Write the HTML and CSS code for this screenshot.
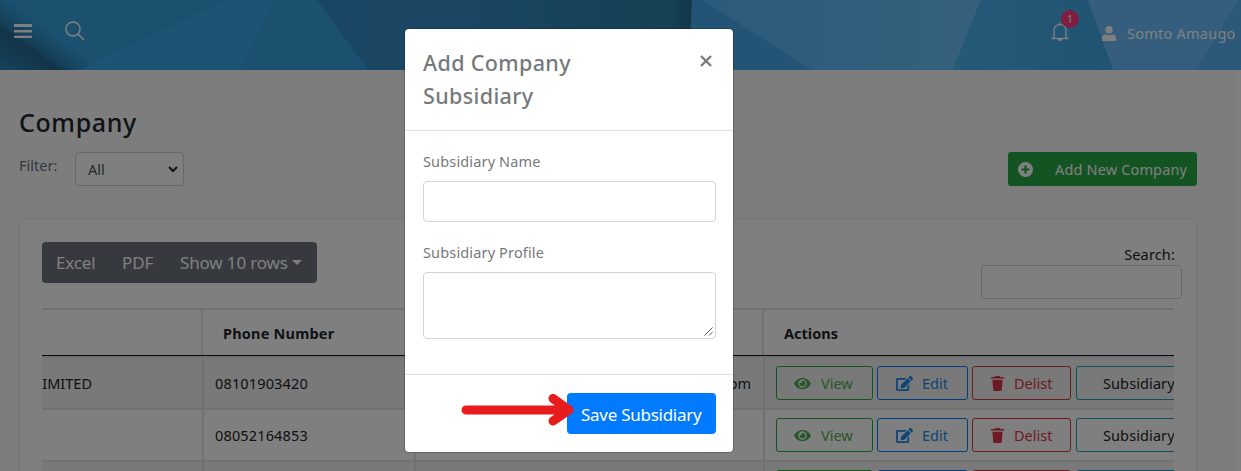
FILE: index.html
```
<!DOCTYPE html>
<html lang="en">
<head>
<meta charset="utf-8">
<title>Company</title>
<link rel="stylesheet" href="styles.css">
</head>
<body>
<svg class="defs" width="0" height="0">
  <symbol id="eye" viewBox="0 0 576 512"><path d="M288 64C160 64 55 145 4 241a32 32 0 0 0 0 30c51 96 156 177 284 177s233-81 284-177a32 32 0 0 0 0-30C521 145 416 64 288 64zm0 336a144 144 0 1 1 0-288 144 144 0 0 1 0 288zm0-240a95 95 0 0 0-25 4 48 48 0 0 1-67 67 96 96 0 1 0 92-71z"/></symbol>
  <symbol id="edit" viewBox="0 0 576 512"><path d="M402.600 83.200l90.200 90.200c3.800 3.800 3.800 10 0 13.800L274.400 405.600l-92.800 10.300c-12.400 1.400-22.900-9.100-21.500-21.500l10.300-92.800L388.800 83.200c3.800-3.800 10-3.800 13.800 0zm162-22.900l-48.800-48.800c-15.200-15.200-39.900-15.200-55.200 0l-35.400 35.400c-3.800 3.800-3.800 10 0 13.800l90.200 90.200c3.800 3.800 10 3.800 13.800 0l35.400-35.400c15.200-15.300 15.200-40 0-55.200zM384 346.200V448H64V128h229.800c3.200 0 6.200-1.300 8.500-3.500l40-40c7.600-7.600 2.200-20.500-8.500-20.500H48C21.500 64 0 85.500 0 112v352c0 26.500 21.500 48 48 48h352c26.500 0 48-21.500 48-48V306.200c0-10.700-12.900-16-20.500-8.500l-40 40c-2.200 2.300-3.500 5.300-3.500 8.500z"/></symbol>
  <symbol id="trash" viewBox="0 0 14 16"><path d="M.5 1H4l.8-1h4.400L10 1h3.500q.5 0 .5.500V2.700H0V1.500Q0 1 .5 1zM1.500 4h11l-.9 10.700Q11.500 16 10.200 16H3.800q-1.300 0-1.400-1.300z"/></symbol>
</svg>

<header class="topbar">
  <svg class="topbar-art" viewBox="0 0 1241 70" preserveAspectRatio="none">
    <defs>
      <linearGradient id="left" gradientUnits="userSpaceOnUse" x1="46" y1="27" x2="8" y2="79"><stop offset="0" stop-color="#2c86b8" stop-opacity="0"/><stop offset=".38" stop-color="#2878a6"/><stop offset=".41" stop-color="#276790"/><stop offset=".55" stop-color="#286f9b"/><stop offset=".9" stop-color="#2a84b4"/></linearGradient>
      <linearGradient id="deep"><stop offset="0" stop-color="#348cca"/><stop offset=".4" stop-color="#348cc8"/><stop offset=".75" stop-color="#2c86b2"/><stop offset=".94" stop-color="#2a80ac"/><stop offset="1" stop-color="#246e92"/></linearGradient>
      <linearGradient id="sky"><stop offset="0" stop-color="#58b6f8"/><stop offset=".8" stop-color="#66c0f8"/><stop offset="1" stop-color="#6ac2fa"/></linearGradient>
      <linearGradient id="valley"><stop offset="0" stop-color="#4eb2f2"/><stop offset="1" stop-color="#42a8e6"/></linearGradient>
    </defs>
    <rect class="f-base" width="1241" height="70"/>
    <rect class="f-left" width="110" height="70"/>
    <polygon class="f-light" points="80,70 225,0 276,0 239,70"/>
    <polygon class="f-deep" points="317,0 692,0 689,70 368,70"/>
    <polygon class="f-low" points="692,0 702,0 812,70 689,70"/>
    <polygon class="f-sky" points="702,0 981,0 953,70 812,70"/>
    <polygon class="f-valley" points="981,0 1088,0 1113,70 953,70"/>
    <polygon class="f-haze" points="1088,0 1239,0 1196,70 1113,70"/>
    <polygon class="f-edge" points="1239,0 1241,0 1241,70 1196,70"/>
  </svg>
  <div class="topbar-row">
    <svg class="burger" viewBox="0 0 18 14"><path d="M0 0h18v3H0zM0 6h18v2.600H0zM0 11.800h18v2.200H0z"/></svg>
    <svg class="lens" viewBox="0 0 20 20"><circle cx="8" cy="8" r="7"/><path d="M13 13l6 6"/></svg>
    <span class="bell-wrap">
      <svg class="bell" viewBox="0 0 18 19"><path d="M0.500 16.500h17M3 16V9c0-4 2.500-6.500 6-6.500s6 2.500 6 6.500v7M9 2.500V0.500"/><path class="clapper" d="M6.500 17h5q-.5 2-2.500 2t-2.500-2z"/></svg>
      <span class="badge">1</span>
    </span>
    <svg class="user" viewBox="0 0 14 15"><circle cx="7" cy="3.700" r="3.700"/><path d="M0 15v-3q0-3.500 3.500-3.500Q7 10 10.500 8.500 14 8.500 14 12v3z"/></svg>
    <span class="user-name">Somto Amaugo</span>
  </div>
</header>

<main class="page">
  <h1 class="title">Company</h1>
  <div class="tools">
    <span class="filter-label">Filter:</span>
    <div class="select"><span>All</span><svg viewBox="0 0 10 7"><path d="M1 1l4 4 4-4"/></svg></div>
    <div class="add"><svg viewBox="0 0 15 15"><path fill-rule="evenodd" d="M7.500 0a7.500 7.500 0 1 0 0 15 7.500 7.500 0 0 0 0-15zM6.400 3.500h2.200v2.900h2.900v2.200H8.600v2.900H6.400V8.600H3.500V6.400h2.900z"/></svg><span>Add New Company</span></div>
  </div>

  <section class="card">
    <div class="card-top">
      <div class="group"><span class="g1">Excel</span><span class="g2">PDF</span><span class="g3">Show 10 rows</span><i class="caret"></i></div>
      <div class="search"><span class="search-label">Search:</span><div class="search-box"></div></div>
    </div>
    <div class="table">
      <div class="tr head"><div class="td"></div><div class="td"><span class="th-phone">Phone Number</span></div><div class="td"></div><div class="td"><span class="th-actions">Actions</span></div></div>
      <div class="tr odd">
        <div class="td first"><span>LIMITED</span></div><div class="td"><span class="num">08101903420</span></div><div class="td mail"><span>gmail.com</span></div>
        <div class="td acts"><div class="btn view"><svg><use href="#eye"/></svg><span>View</span></div><div class="btn edit"><svg><use href="#edit"/></svg><span>Edit</span></div><div class="btn delist"><svg><use href="#trash"/></svg><span>Delist</span></div><div class="btn sub"><span>Subsidiary</span></div></div>
      </div>
      <div class="tr">
        <div class="td first"></div><div class="td"><span class="num">08052164853</span></div><div class="td mail"></div>
        <div class="td acts"><div class="btn view"><svg><use href="#eye"/></svg><span>View</span></div><div class="btn edit"><svg><use href="#edit"/></svg><span>Edit</span></div><div class="btn delist"><svg><use href="#trash"/></svg><span>Delist</span></div><div class="btn sub"><span>Subsidiary</span></div></div>
      </div>
      <div class="tr odd last">
        <div class="td"></div><div class="td"></div><div class="td"></div>
        <div class="td acts"><div class="btn view"></div><div class="btn edit"></div><div class="btn delist"></div><div class="btn sub"></div></div>
      </div>
    </div>
  </section>
</main>
<div class="scrollbar"></div>

<div class="backdrop"></div>
<div class="modal">
  <div class="modal-head"><h2>Add Company Subsidiary</h2><svg class="close" viewBox="0 0 12 12"><path d="M1 1l10 10M11 1L1 11"/></svg></div>
  <div class="modal-body">
    <label class="lab-name">Subsidiary Name</label>
    <div class="input"></div>
    <label class="lab-profile">Subsidiary Profile</label>
    <div class="input area"><svg viewBox="0 0 9 9"><path d="M.5 8.500l8-8M5 8.500L8.500 5"/></svg></div>
  </div>
  <div class="modal-foot"><div class="save">Save Subsidiary</div></div>
  <svg class="arrow" viewBox="0 0 114 32"><path d="M5 16H108M92 4.500L108 16L92 27"/></svg>
</div>
</body>
</html>
```
FILE: styles.css
```
* { box-sizing: border-box; }
body { margin: 0; height: 471px; overflow: hidden; position: relative; background: #fafafa; color: #212529; font: 14.5px/22px "Noto Sans", "Open Sans", sans-serif; }
.defs { display: block; position: absolute; }
span, label { white-space: nowrap; }

.topbar { position: relative; height: 70px; overflow: hidden; }
.topbar-art { position: absolute; inset: 0; width: 1241px; height: 70px; }
.f-base { fill: #36a0de; }
.f-left { fill: url(#left); }
.f-light { fill: #3ca8e6; }
.f-deep { fill: url(#deep); }
.f-low { fill: #46a8ea; }
.f-sky { fill: url(#sky); }
.f-valley { fill: url(#valley); }
.f-haze { fill: #6abcfc; }
.f-edge { fill: #58b2f2; }
.topbar-row { position: relative; display: flex; height: 70px; padding: 0 6px 0 14px; color: #fff; fill: #fff; }
.burger { width: 18px; height: 14px; margin-top: 24px; }
.lens { width: 20px; height: 20px; margin: 21px 0 0 33px; fill: none; stroke: #fff; stroke-width: 1.5; }
.bell-wrap { position: relative; width: 18px; height: 19px; margin: 22px 0 0 auto; }
.bell { display: block; width: 18px; height: 19px; fill: none; stroke: #fff; stroke-width: 1.3; }
.bell .clapper { fill: #fff; stroke: none; }
.badge { position: absolute; left: 10px; top: -12px; width: 18px; height: 18px; border-radius: 9px; background: #ff3d7f; font-size: 11px; line-height: 18px; text-align: center; }
.user { width: 14px; height: 15px; margin: 26px 11px 0 33px; }
.user-name { width: 108px; margin-top: 22px; letter-spacing: .24px; }

.page { height: 401px; overflow: hidden; padding: 38px 44px 0 19px; }
.title { margin: 0; height: 44px; padding-top: 0; font-size: 25px; line-height: 28px; font-weight: 500; letter-spacing: .6px; }
.tools { display: flex; height: 68px; }
.filter-label { width: 56px; margin-top: 2px; color: #6c757d; }
.select { display: flex; align-items: center; justify-content: space-between; width: 109px; height: 34px; padding: 0 5px 0 12px; border: 1px solid #ced4da; border-radius: 4px; background: #fff; color: #495057; }
.select svg { width: 10px; height: 7px; fill: none; stroke: #212529; stroke-width: 2; }
.add { display: flex; align-items: center; gap: 22px; width: 189px; height: 34px; margin-left: auto; padding-left: 10px; border-radius: 3px; background: #28a745; color: #fff; fill: #fff; letter-spacing: .15px; }
.add svg { width: 15px; height: 15px; }

.card { width: 1176px; height: 300px; margin-left: 1px; padding: 22px 22px 0; border-radius: 4px; background: #fff; box-shadow: 0 0 3px rgba(0,0,0,.1); }
.card-top { display: flex; justify-content: space-between; height: 66px; }
.group { display: flex; align-items: center; width: 275px; height: 41px; padding-left: 14px; border-radius: 4px; background: #6c757d; color: #fff; font-size: 17px; letter-spacing: -.15px; }
.g1 { width: 66px; }
.g2 { width: 58px; }
.g3 { width: 112px; }
.caret { border: 5px solid transparent; border-top-color: #fff; border-bottom: 0; }
.search { width: 201px; margin-right: -8px; }
.search-label { display: block; height: 23px; padding-right: 7px; line-height: 24px; text-align: right; letter-spacing: .15px; }
.search-box { height: 34px; border: 1px solid #ced4da; border-radius: 4px; }

.table { width: 1132px; height: 163px; overflow: hidden; border-top: 2px solid #dee2e6; }
.tr { display: grid; grid-template-columns: 162px 212px 349px 1fr; height: 52px; border-bottom: 2px solid #dee2e6; }
.tr.odd { background: #f2f2f2; }
.tr.last { height: 52px; }
.tr.head { grid-template-columns: 161px 212px 349px 1fr; height: 48px; position: relative; font-weight: 700; letter-spacing: .2px; }
.tr.head::after { content: ""; position: absolute; left: 0; right: 0; bottom: 0; height: 1px; background: #111; }
.td { display: flex; align-items: center; min-width: 0; overflow: hidden; border-right: 2px solid #dee2e6; }
.td:last-child { border-right: 0; }
.th-phone, .th-actions { margin-left: 20px; }
.th-actions { letter-spacing: 0; }
.num { margin-left: 11px; letter-spacing: .15px; }
.first { padding-right: 110px; justify-content: flex-end; }
.mail { padding-right: 12px; justify-content: flex-end; }
.acts { padding-left: 11px; }
.btn { display: flex; align-items: center; flex: none; height: 34px; border: 1px solid; border-radius: 3px; }
.btn svg { flex: none; fill: currentColor; }
.view { width: 97px; margin-right: 4px; border-color: #28a745; color: #4caf50; }
.view svg { width: 17px; height: 15px; margin: 0 10px 0 17px; }
.edit { width: 91px; margin-right: 4px; border-color: #007bff; color: #2188e8; }
.edit svg { width: 17px; height: 15px; margin: 0 9px 0 18px; }
.delist { width: 99px; margin-right: 5px; color: #dc3545; }
.delist svg { width: 13px; height: 15px; margin: 0 10px 0 18px; }
.sub { width: 120px; border-color: #17a2b8; }
.sub span { margin-left: 26px; letter-spacing: .1px; }

.scrollbar { position: absolute; top: 70px; right: 0; width: 5px; height: 401px; background: #fefefe; }
.backdrop { position: absolute; inset: 0; background: rgba(0,0,0,.5); }

.modal { position: absolute; left: 405px; top: 29px; width: 328px; height: 423px; border-radius: 4px; background: #fff; color: #76797c; box-shadow: 0 0 0 1px rgba(0,0,0,.2); }
.modal-head { display: flex; justify-content: space-between; height: 102px; padding: 17px 21px 0 18px; border-bottom: 1px solid #dee2e6; }
.modal-head h2 { width: 200px; margin: 0; font-size: 21.5px; line-height: 33px; font-weight: 500; letter-spacing: .36px; }
.close { width: 12px; height: 12px; margin-top: 9px; fill: none; stroke: #7b7b7b; stroke-width: 2.4; }
.modal-body { height: 244px; padding: 19px 17px 0 18px; border-bottom: 1px solid #dee2e6; }
.modal-body label { display: block; height: 31px; letter-spacing: .15px; }
.input { height: 41px; margin-bottom: 19px; border: 1px solid #ced4da; border-radius: 4px; }
.input.area { display: flex; align-items: flex-end; justify-content: flex-end; height: 67px; padding: 2px; margin: 0; }
.area svg { width: 9px; height: 9px; fill: none; stroke: #555; stroke-width: 1; }
.modal-foot { display: flex; justify-content: flex-end; padding: 18px 17px; }
.save { width: 149px; height: 41px; padding-left: 14px; border-radius: 4px; background: #007bff; color: #fff; font-size: 17px; line-height: 43px; letter-spacing: -.27px; white-space: nowrap; }
.arrow { position: absolute; left: 56px; top: 365px; width: 114px; height: 32px; fill: none; stroke: #e81c1c; stroke-width: 9; stroke-linecap: round; stroke-linejoin: round; }
```
